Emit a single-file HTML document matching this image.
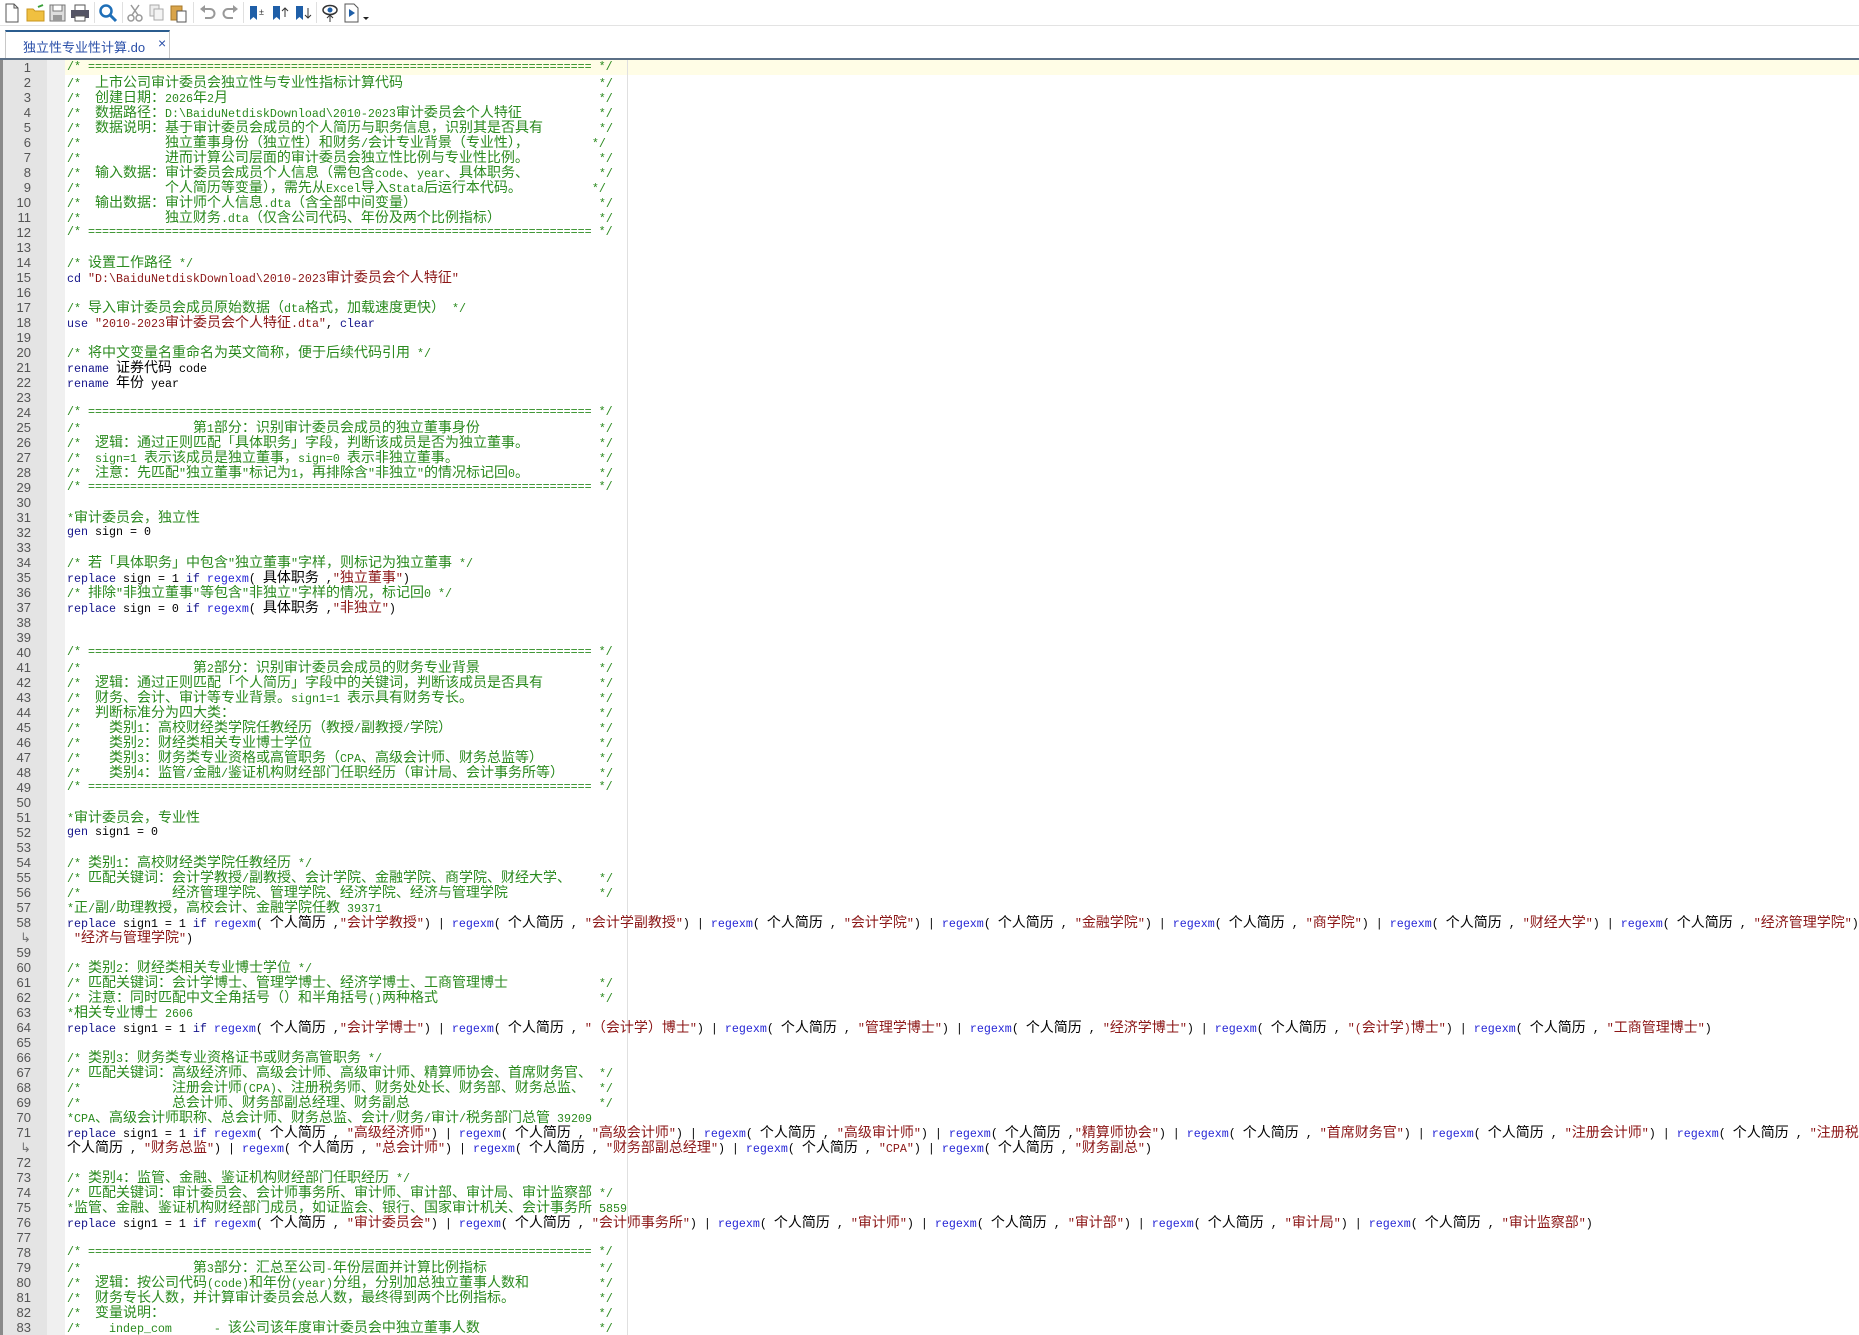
<!DOCTYPE html>
<html><head><meta charset="utf-8">
<style>
*{margin:0;padding:0;box-sizing:border-box}
html,body{width:1859px;height:1335px;overflow:hidden;background:#fff}
body{position:relative;font-family:"Liberation Sans","Noto Sans CJK SC",sans-serif}
#tb{position:absolute;left:0;top:0;width:1859px;height:26px;background:#fff;border-bottom:1px solid #e3e3e3}
#tb svg{position:absolute;top:3px}
.sep{position:absolute;top:2px;width:1px;height:21px;background:#e0e0e0}
#tabs{position:absolute;left:0;top:26px;width:1859px;height:32px;background:#fff}
#tab{position:absolute;left:5px;top:4px;width:165px;height:28px;border:1px solid #c8c8c8;border-top:2px solid #2b5d8f;border-bottom:none;background:#fff}
#tab span{position:absolute;left:17px;top:5px;font-size:13px;color:#2a4fa8}
#tab b{position:absolute;left:152px;top:3px;font-size:14px;font-weight:normal;color:#2a4fa8}
#ed{position:absolute;left:0;top:58px;width:1859px;height:1277px;border-top:2px solid #5b6f86;background:#fff;overflow:hidden}
#lb{position:absolute;left:0;top:0;width:3px;height:100%;background:#8a8a8a}
#g1{position:absolute;left:3px;top:0;width:44px;height:100%;background:#e4e4e4}
#g2{position:absolute;left:47px;top:0;width:18px;height:100%;background:#f0f0f0}
#edge{position:absolute;left:627px;top:0;width:1px;height:100%;background:#e0e0e0}
#cur{position:absolute;left:65px;top:0;width:1794px;height:15px;background:#fffde6}
#rows{position:absolute;left:0;top:0;width:1859px}
.r{position:relative;height:15px;width:1859px;overflow:hidden;white-space:pre;font-family:"Liberation Mono","Noto Sans CJK SC",monospace;font-size:11.67px;line-height:15px;color:#000}
.n{position:absolute;left:0;width:31px;text-align:right;color:#555;font-family:"Liberation Sans",sans-serif;font-size:13px}
.t{position:absolute;left:67px}
.c{color:#2a8a1e}
.k{color:#14148a}
.f{color:#2626d6}
.s{color:#8b1616}
.z{font-size:14px;font-family:"Noto Sans CJK SC",sans-serif;line-height:15px}
</style></head><body>
<div id="tb">
<svg style="left:4px" width="16" height="20" viewBox="0 0 16 20"><path d="M2 1h8l4 4v14H2z" fill="#fff" stroke="#555"/><path d="M10 1v4h4" fill="none" stroke="#555"/></svg>
<svg style="left:26px" width="20" height="20" viewBox="0 0 20 20"><path d="M1 6h6l2 2h9v10H1z" fill="#f0c040" stroke="#c8961e"/><path d="M12 4l5-2" stroke="#3aa03a" stroke-width="2"/></svg>
<svg style="left:49px" width="18" height="20" viewBox="0 0 18 20"><rect x="1" y="2" width="15" height="16" fill="#ddd" stroke="#777"/><rect x="4" y="2" width="9" height="6" fill="#fff" stroke="#777"/><rect x="4" y="12" width="9" height="6" fill="#999"/></svg>
<svg style="left:70px" width="20" height="20" viewBox="0 0 20 20"><rect x="5" y="2" width="10" height="6" fill="#fff" stroke="#555"/><rect x="1" y="7" width="18" height="8" fill="#556" /><rect x="5" y="13" width="10" height="5" fill="#fff" stroke="#555"/></svg>
<div class="sep" style="left:94px"></div>
<svg style="left:98px" width="20" height="20" viewBox="0 0 20 20"><circle cx="8" cy="8" r="5.5" fill="none" stroke="#1f6fb8" stroke-width="2.5"/><path d="M12 12l6 6" stroke="#1f6fb8" stroke-width="3"/></svg>
<div class="sep" style="left:122px"></div>
<svg style="left:126px" width="18" height="20" viewBox="0 0 18 20"><circle cx="5" cy="15" r="3" fill="none" stroke="#999" stroke-width="1.5"/><circle cx="13" cy="15" r="3" fill="none" stroke="#999" stroke-width="1.5"/><path d="M6 12L13 2M12 12L5 2" stroke="#999" stroke-width="1.5"/></svg>
<svg style="left:148px" width="18" height="20" viewBox="0 0 18 20"><rect x="2" y="2" width="9" height="11" fill="#eee" stroke="#aaa"/><rect x="6" y="6" width="9" height="11" fill="#f4f4f4" stroke="#aaa"/></svg>
<svg style="left:170px" width="18" height="20" viewBox="0 0 18 20"><rect x="1" y="3" width="11" height="14" fill="#d9a44a" stroke="#a87a2a"/><rect x="7" y="8" width="9" height="11" fill="#fff" stroke="#555"/></svg>
<div class="sep" style="left:193px"></div>
<svg style="left:199px" width="18" height="20" viewBox="0 0 18 20"><path d="M5 6h6a4 4 0 010 9H6" fill="none" stroke="#999" stroke-width="2"/><path d="M1 6l5-4v8z" fill="#999"/></svg>
<svg style="left:221px" width="18" height="20" viewBox="0 0 18 20"><path d="M13 6H7a4 4 0 000 9h5" fill="none" stroke="#999" stroke-width="2"/><path d="M17 6l-5-4v8z" fill="#999"/></svg>
<div class="sep" style="left:243px"></div>
<svg style="left:248px" width="20" height="20" viewBox="0 0 20 20"><path d="M2 3h7v14l-3.5-3L2 17z" fill="#1f5fa8"/><text x="11" y="12" font-size="9" fill="#333" font-family="Liberation Sans">±</text></svg>
<svg style="left:271px" width="20" height="20" viewBox="0 0 20 20"><path d="M2 3h7v14l-3.5-3L2 17z" fill="#1f5fa8"/><path d="M14 14V5M11 8l3-3 3 3" stroke="#333" fill="none"/></svg>
<svg style="left:294px" width="20" height="20" viewBox="0 0 20 20"><path d="M2 3h7v14l-3.5-3L2 17z" fill="#1f5fa8"/><path d="M14 5v10M11 12l3 3 3-3" stroke="#333" fill="none"/></svg>
<div class="sep" style="left:316px"></div>
<svg style="left:320px" width="20" height="20" viewBox="0 0 20 20"><ellipse cx="10" cy="7" rx="7" ry="4.5" fill="none" stroke="#333" stroke-width="1.5"/><circle cx="10" cy="7" r="2.5" fill="#1f5fa8"/><path d="M10 19v-7M7 15l3-3 3 3" stroke="#333" fill="none"/></svg>
<svg style="left:344px" width="16" height="20" viewBox="0 0 16 20"><path d="M1 1h9l4 4v14H1z" fill="#fff" stroke="#555"/><path d="M5 6l6 4-6 4z" fill="#1f5fa8"/></svg>
<svg style="left:362px" width="8" height="20" viewBox="0 0 8 20"><path d="M1 14h6l-3 3z" fill="#222"/></svg>
</div>
<div id="tabs"><div id="tab"><span>独立性专业性计算.do</span><b>×</b></div></div>
<div id="ed">
<div id="lb"></div><div id="g1"></div><div id="g2"></div><div id="cur"></div><div id="edge"></div>
<div id="rows">
<div class="r"><span class="n">1</span><span class="t">/* ======================================================================== */</span></div>
<div class="r"><span class="n">2</span><span class="t">/*  上市公司审计委员会独立性与专业性指标计算代码                            */</span></div>
<div class="r"><span class="n">3</span><span class="t">/*  创建日期：2026年2月                                                   */</span></div>
<div class="r"><span class="n">4</span><span class="t">/*  数据路径：D:\BaiduNetdiskDownload\2010-2023审计委员会个人特征           */</span></div>
<div class="r"><span class="n">5</span><span class="t">/*  数据说明：基于审计委员会成员的个人简历与职务信息，识别其是否具有          */</span></div>
<div class="r"><span class="n">6</span><span class="t">/*            独立董事身份（独立性）和财务/会计专业背景（专业性），          */</span></div>
<div class="r"><span class="n">7</span><span class="t">/*            进而计算公司层面的审计委员会独立性比例与专业性比例。          */</span></div>
<div class="r"><span class="n">8</span><span class="t">/*  输入数据：审计委员会成员个人信息（需包含code、year、具体职务、         */</span></div>
<div class="r"><span class="n">9</span><span class="t">/*            个人简历等变量），需先从Excel导入Stata后运行本代码。         */</span></div>
<div class="r"><span class="n">10</span><span class="t">/*  输出数据：审计师个人信息.dta（含全部中间变量）                         */</span></div>
<div class="r"><span class="n">11</span><span class="t">/*            独立财务.dta（仅含公司代码、年份及两个比例指标）             */</span></div>
<div class="r"><span class="n">12</span><span class="t">/* ======================================================================== */</span></div>
<div class="r"><span class="n">13</span><span class="t"></span></div>
<div class="r"><span class="n">14</span><span class="t">/* 设置工作路径 */</span></div>
<div class="r"><span class="n">15</span><span class="t">cd "D:\BaiduNetdiskDownload\2010-2023审计委员会个人特征"</span></div>
<div class="r"><span class="n">16</span><span class="t"></span></div>
<div class="r"><span class="n">17</span><span class="t">/* 导入审计委员会成员原始数据（dta格式，加载速度更快） */</span></div>
<div class="r"><span class="n">18</span><span class="t">use "2010-2023审计委员会个人特征.dta", clear</span></div>
<div class="r"><span class="n">19</span><span class="t"></span></div>
<div class="r"><span class="n">20</span><span class="t">/* 将中文变量名重命名为英文简称，便于后续代码引用 */</span></div>
<div class="r"><span class="n">21</span><span class="t">rename 证券代码 code</span></div>
<div class="r"><span class="n">22</span><span class="t">rename 年份 year</span></div>
<div class="r"><span class="n">23</span><span class="t"></span></div>
<div class="r"><span class="n">24</span><span class="t">/* ======================================================================== */</span></div>
<div class="r"><span class="n">25</span><span class="t">/*                第1部分：识别审计委员会成员的独立董事身份                  */</span></div>
<div class="r"><span class="n">26</span><span class="t">/*  逻辑：通过正则匹配「具体职务」字段，判断该成员是否为独立董事。         */</span></div>
<div class="r"><span class="n">27</span><span class="t">/*  sign=1 表示该成员是独立董事，sign=0 表示非独立董事。                   */</span></div>
<div class="r"><span class="n">28</span><span class="t">/*  注意：先匹配"独立董事"标记为1，再排除含"非独立"的情况标记回0。       */</span></div>
<div class="r"><span class="n">29</span><span class="t">/* ======================================================================== */</span></div>
<div class="r"><span class="n">30</span><span class="t"></span></div>
<div class="r"><span class="n">31</span><span class="t">*审计委员会，独立性</span></div>
<div class="r"><span class="n">32</span><span class="t">gen sign = 0</span></div>
<div class="r"><span class="n">33</span><span class="t"></span></div>
<div class="r"><span class="n">34</span><span class="t">/* 若「具体职务」中包含"独立董事"字样，则标记为独立董事 */</span></div>
<div class="r"><span class="n">35</span><span class="t">replace sign = 1 if regexm( 具体职务 ,"独立董事")</span></div>
<div class="r"><span class="n">36</span><span class="t">/* 排除"非独立董事"等包含"非独立"字样的情况，标记回0 */</span></div>
<div class="r"><span class="n">37</span><span class="t">replace sign = 0 if regexm( 具体职务 ,"非独立")</span></div>
<div class="r"><span class="n">38</span><span class="t"></span></div>
<div class="r"><span class="n">39</span><span class="t"></span></div>
<div class="r"><span class="n">40</span><span class="t">/* ======================================================================== */</span></div>
<div class="r"><span class="n">41</span><span class="t">/*                第2部分：识别审计委员会成员的财务专业背景                  */</span></div>
<div class="r"><span class="n">42</span><span class="t">/*  逻辑：通过正则匹配「个人简历」字段中的关键词，判断该成员是否具有       */</span></div>
<div class="r"><span class="n">43</span><span class="t">/*  财务、会计、审计等专业背景。sign1=1 表示具有财务专长。                */</span></div>
<div class="r"><span class="n">44</span><span class="t">/*  判断标准分为四大类：                                                  */</span></div>
<div class="r"><span class="n">45</span><span class="t">/*    类别1：高校财经类学院任教经历（教授/副教授/学院）                   */</span></div>
<div class="r"><span class="n">46</span><span class="t">/*    类别2：财经类相关专业博士学位                                       */</span></div>
<div class="r"><span class="n">47</span><span class="t">/*    类别3：财务类专业资格或高管职务（CPA、高级会计师、财务总监等）      */</span></div>
<div class="r"><span class="n">48</span><span class="t">/*    类别4：监管/金融/鉴证机构财经部门任职经历（审计局、会计事务所等）   */</span></div>
<div class="r"><span class="n">49</span><span class="t">/* ======================================================================== */</span></div>
<div class="r"><span class="n">50</span><span class="t"></span></div>
<div class="r"><span class="n">51</span><span class="t">*审计委员会，专业性</span></div>
<div class="r"><span class="n">52</span><span class="t">gen sign1 = 0</span></div>
<div class="r"><span class="n">53</span><span class="t"></span></div>
<div class="r"><span class="n">54</span><span class="t">/* 类别1：高校财经类学院任教经历 */</span></div>
<div class="r"><span class="n">55</span><span class="t">/* 匹配关键词：会计学教授/副教授、会计学院、金融学院、商学院、财经大学、  */</span></div>
<div class="r"><span class="n">56</span><span class="t">/*             经济管理学院、管理学院、经济学院、经济与管理学院            */</span></div>
<div class="r"><span class="n">57</span><span class="t">*正/副/助理教授，高校会计、金融学院任教 39371</span></div>
<div class="r"><span class="n">58</span><span class="t">replace sign1 = 1 if regexm( 个人简历 ,"会计学教授") | regexm( 个人简历 , "会计学副教授") | regexm( 个人简历 , "会计学院") | regexm( 个人简历 , "金融学院") | regexm( 个人简历 , "商学院") | regexm( 个人简历 , "财经大学") | regexm( 个人简历 , "经济管理学院") | regexm( 个人简历 ,</span></div>
<div class="r"><span class="n" style="color:#777">↳</span><span class="t"> "经济与管理学院")</span></div>
<div class="r"><span class="n">59</span><span class="t"></span></div>
<div class="r"><span class="n">60</span><span class="t">/* 类别2：财经类相关专业博士学位 */</span></div>
<div class="r"><span class="n">61</span><span class="t">/* 匹配关键词：会计学博士、管理学博士、经济学博士、工商管理博士           */</span></div>
<div class="r"><span class="n">62</span><span class="t">/* 注意：同时匹配中文全角括号（）和半角括号()两种格式                     */</span></div>
<div class="r"><span class="n">63</span><span class="t">*相关专业博士 2606</span></div>
<div class="r"><span class="n">64</span><span class="t">replace sign1 = 1 if regexm( 个人简历 ,"会计学博士") | regexm( 个人简历 , "（会计学）博士") | regexm( 个人简历 , "管理学博士") | regexm( 个人简历 , "经济学博士") | regexm( 个人简历 , "(会计学)博士") | regexm( 个人简历 , "工商管理博士")</span></div>
<div class="r"><span class="n">65</span><span class="t"></span></div>
<div class="r"><span class="n">66</span><span class="t">/* 类别3：财务类专业资格证书或财务高管职务 */</span></div>
<div class="r"><span class="n">67</span><span class="t">/* 匹配关键词：高级经济师、高级会计师、高级审计师、精算师协会、首席财务官、 */</span></div>
<div class="r"><span class="n">68</span><span class="t">/*             注册会计师(CPA)、注册税务师、财务处处长、财务部、财务总监、  */</span></div>
<div class="r"><span class="n">69</span><span class="t">/*             总会计师、财务部副总经理、财务副总                          */</span></div>
<div class="r"><span class="n">70</span><span class="t">*CPA、高级会计师职称、总会计师、财务总监、会计/财务/审计/税务部门总管 39209</span></div>
<div class="r"><span class="n">71</span><span class="t">replace sign1 = 1 if regexm( 个人简历 , "高级经济师") | regexm( 个人简历 , "高级会计师") | regexm( 个人简历 , "高级审计师") | regexm( 个人简历 ,"精算师协会") | regexm( 个人简历 , "首席财务官") | regexm( 个人简历 , "注册会计师") | regexm( 个人简历 , "注册税务师") | regexm(</span></div>
<div class="r"><span class="n" style="color:#777">↳</span><span class="t">个人简历 , "财务总监") | regexm( 个人简历 , "总会计师") | regexm( 个人简历 , "财务部副总经理") | regexm( 个人简历 , "CPA") | regexm( 个人简历 , "财务副总")</span></div>
<div class="r"><span class="n">72</span><span class="t"></span></div>
<div class="r"><span class="n">73</span><span class="t">/* 类别4：监管、金融、鉴证机构财经部门任职经历 */</span></div>
<div class="r"><span class="n">74</span><span class="t">/* 匹配关键词：审计委员会、会计师事务所、审计师、审计部、审计局、审计监察部 */</span></div>
<div class="r"><span class="n">75</span><span class="t">*监管、金融、鉴证机构财经部门成员，如证监会、银行、国家审计机关、会计事务所 5859</span></div>
<div class="r"><span class="n">76</span><span class="t">replace sign1 = 1 if regexm( 个人简历 , "审计委员会") | regexm( 个人简历 , "会计师事务所") | regexm( 个人简历 , "审计师") | regexm( 个人简历 , "审计部") | regexm( 个人简历 , "审计局") | regexm( 个人简历 , "审计监察部")</span></div>
<div class="r"><span class="n">77</span><span class="t"></span></div>
<div class="r"><span class="n">78</span><span class="t">/* ======================================================================== */</span></div>
<div class="r"><span class="n">79</span><span class="t">/*                第3部分：汇总至公司-年份层面并计算比例指标                 */</span></div>
<div class="r"><span class="n">80</span><span class="t">/*  逻辑：按公司代码(code)和年份(year)分组，分别加总独立董事人数和         */</span></div>
<div class="r"><span class="n">81</span><span class="t">/*  财务专长人数，并计算审计委员会总人数，最终得到两个比例指标。           */</span></div>
<div class="r"><span class="n">82</span><span class="t">/*  变量说明：                                                            */</span></div>
<div class="r"><span class="n">83</span><span class="t">/*    indep_com      - 该公司该年度审计委员会中独立董事人数               */</span></div>
</div>
</div>
<script>
(function(){
var cjk=/[\u3000-\u303f\u4e00-\u9fff\uff00-\uffef]/;
function dw(s){var w=0;for(var i=0;i<s.length;i++)w+=cjk.test(s[i])?2:1;return w;}
function esc(s){return s.replace(/&/g,'&amp;').replace(/</g,'&lt;').replace(/>/g,'&gt;');}
function z(s){return esc(s).replace(/[\u3000-\u303f\u4e00-\u9fff\uff00-\uffef]+/g,function(m){return '<span class="z">'+m+'</span>';});}
var ts=document.querySelectorAll('.t');
for(var i=0;i<ts.length;i++){
 var t=ts[i],s=t.textContent;
 var m=s.match(/^(\/\*.*?\S)\s{2,}\*\/$/);
 if(m&&s.indexOf('====')<0){var w=dw(m[1]);var target=76;var pad=Math.max(1,target-w);s=m[1]+new Array(pad+1).join(' ')+'*/';}
 var tr=s.replace(/^\s+/,'');
 if(tr.indexOf('/*')==0||tr.indexOf('*')==0){t.innerHTML='<span class="c">'+z(s)+'</span>';continue;}
 var out='',re=/("[^"]*"?)|\b(replace|gen|use|rename|cd|if|clear)\b|\b(regexm)\b/g,last=0,r;
 while((r=re.exec(s))){out+=z(s.slice(last,r.index));
  if(r[1])out+='<span class="s">'+z(r[1])+'</span>';
  else if(r[2])out+='<span class="k">'+r[2]+'</span>';
  else out+='<span class="f">'+r[3]+'</span>';
  last=re.lastIndex;}
 out+=z(s.slice(last));t.innerHTML=out;
}
})();
</script>
</body></html>
